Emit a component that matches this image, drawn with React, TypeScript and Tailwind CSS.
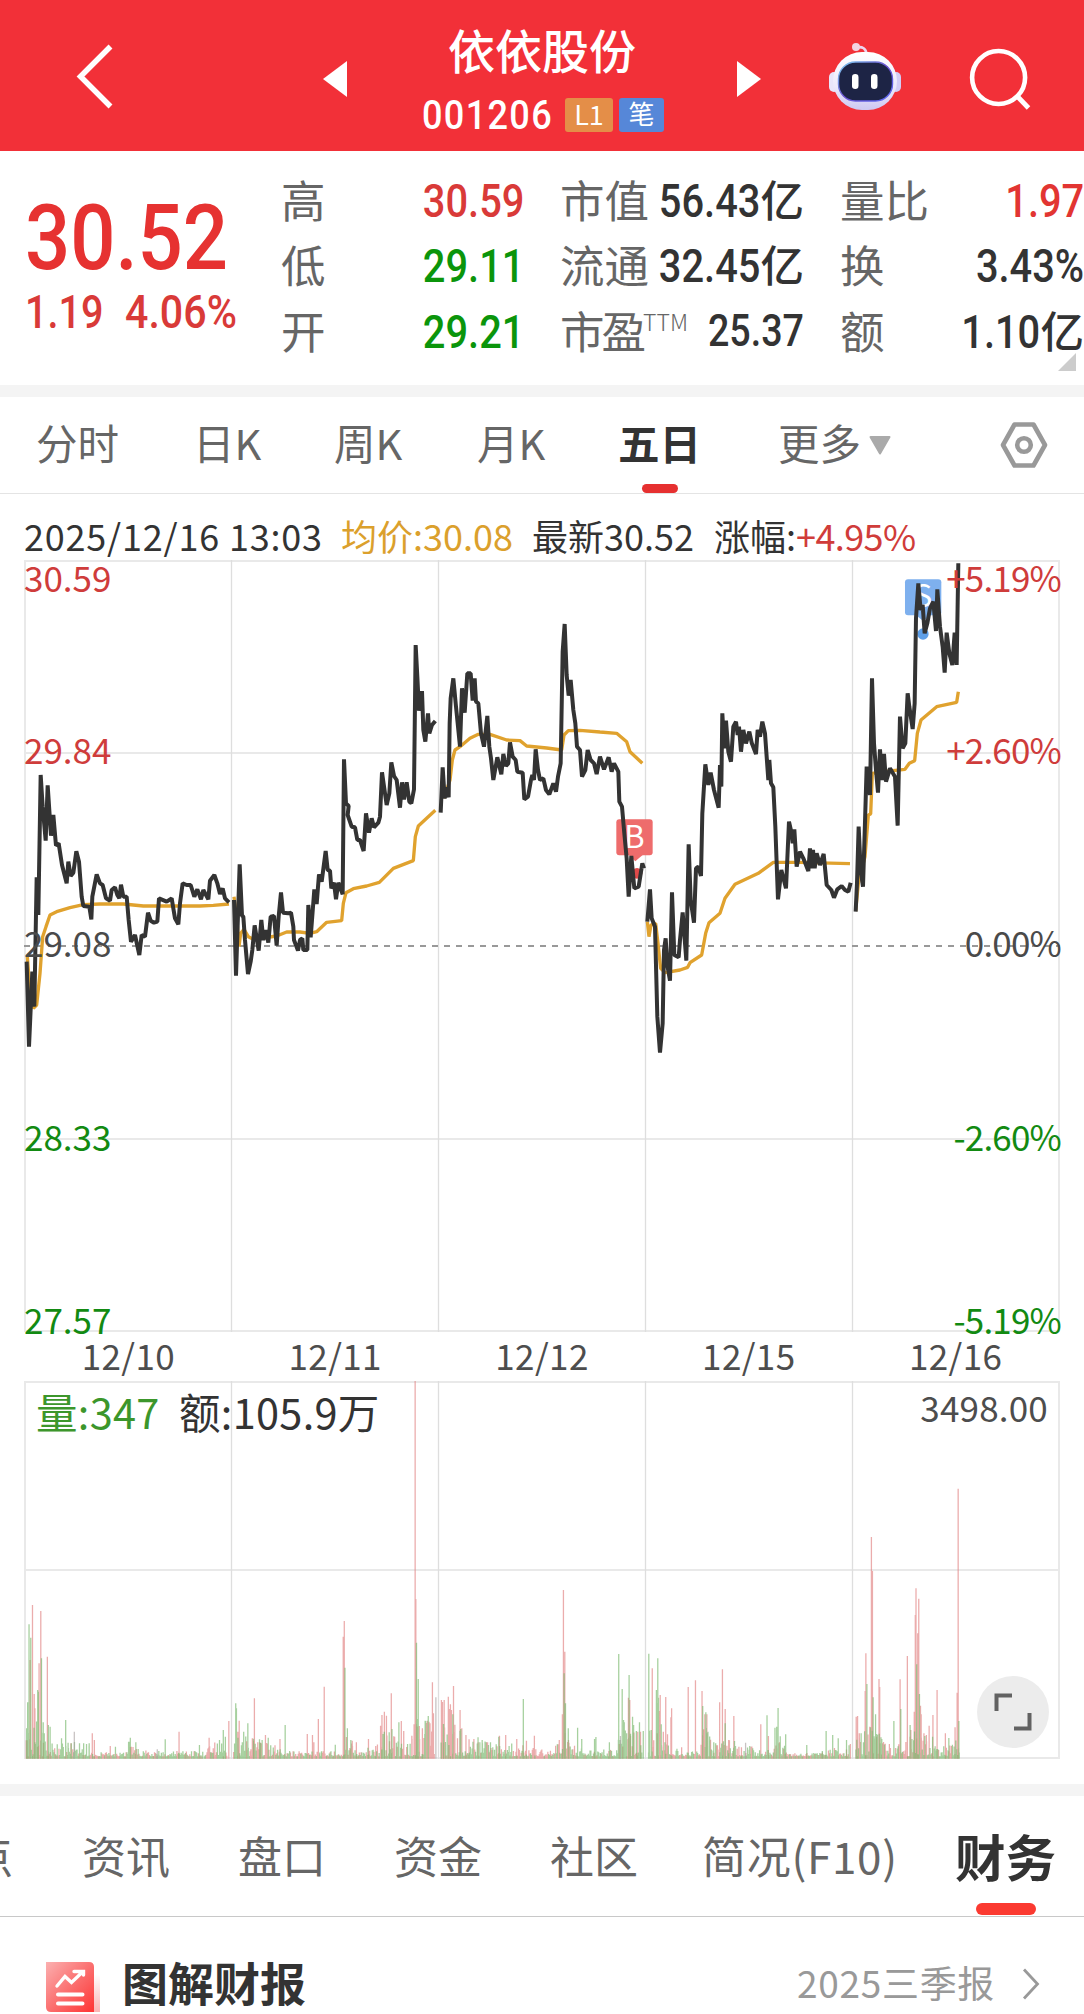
import React from "react";

const CJK = "font-['Noto_Sans_CJK_SC',sans-serif]";
const NUM = "font-['Roboto','Noto_Sans_CJK_SC',sans-serif]";

/* ---------- price data: one entry per trading day, three units per pixel ---------- */
const days = [
  {
    dx: 0,
    price:
      "80,1235 87,1490 97,1265 103,1370 110,982 115,1095 122,675 128,770 137,872 143,706 153,857 160,795 168,887 176,880 186,945 200,1000 205,935 212,978 220,968 229,904 237,935 245,1040 250,1068 268,1070 274,1108 277,1040 290,973 300,1000 308,1005 318,1045 330,1052 335,1020 345,1012 352,1035 358,1045 363,1004 370,1040 380,1040 386,1110 393,1175 405,1155 418,1215 425,1155 435,1160 444,1088 452,1112 462,1118 472,1115 477,1045 500,1055 515,1045 525,1105 535,1123 540,1060 548,1000 560,1005 572,1005 583,1040 592,1018 603,1048 610,1020 625,1048 630,992 643,975 652,1000 660,1032 668,1015 675,1045 687,1057",
    avg: "82,1220 88,1300 100,1375 110,1365 120,1270 128,1160 138,1130 150,1095 170,1085 210,1073 250,1064 300,1062 370,1062 430,1068 500,1068 600,1068 640,1066 687,1062",
  },
  {
    dx: 660,
    price:
      "42,1050 48,1277 59,943 66,1097 70,1100 75,1170 84,1272 92,1235 97,1200 104,1126 116,1202 124,1110 130,1170 138,1140 145,1178 152,1100 162,1098 170,1187 176,1100 183,1027 189,1088 205,1090 213,1088 220,1130 222,1170 234,1202 240,1170 247,1165 250,1200 262,1200 265,1065 272,1162 283,1018 290,1062 297,973 305,995 317,903 323,960 330,962 334,1015 342,998 348,1048 355,998 368,1033 372,628 378,760 386,768 383,795 395,830 405,832 412,870 420,870 431,903 438,790 447,848 455,805 462,832 475,818 480,800 486,667 500,765 508,730 514,637 522,678 530,690 540,773 546,697 552,748 560,697 568,755 574,760 582,718 587,285 592,380 597,482 606,423 610,540 616,575 624,490 628,550 636,525 646,513",
    avg: "42,1040 50,1100 57,1190 62,1150 72,1138 85,1160 100,1168 170,1158 200,1146 240,1146 270,1150 290,1145 320,1117 365,1112 370,1060 378,1028 400,1016 440,1008 478,997 520,955 580,932 586,860 595,828 620,805 646,781",
  },
  {
    dx: 1260,
    price:
      "62,788 68,652 74,745 80,712 86,742 89,520 92,445 100,385 108,470 120,590 126,415 134,488 142,370 152,370 158,452 164,385 168,455 175,460 183,550 192,590 202,498 208,590 213,625 220,690 232,622 244,673 250,612 258,648 265,640 270,577 278,620 287,630 292,665 308,668 313,748 324,740 333,690 337,675 342,690 347,598 354,660 360,690 370,685 378,720 388,733 400,700 408,725 414,680 422,640 428,305 434,222 440,375 446,437 452,390 460,480 466,520 471,590 480,600 486,680 496,660 503,600 512,630 522,640 530,672 540,620 552,658 566,622 575,665 582,640 595,665 598,755 606,770 613,850 620,925 626,1040 634,918 643,1015 656,1010 667,940 672,955",
    avg: "72,745 90,690 97,630 105,600 120,590 150,565 175,553 210,553 260,570 300,572 320,588 380,594 425,600 432,555 445,542 480,541 540,546 590,550 620,575 630,605 667,640",
  },
  {
    dx: 1860,
    price:
      "82,1115 90,1018 95,1105 105,1130 112,1400 120,1508 128,1420 132,1200 137,1165 142,1245 150,1292 156,1027 163,1215 176,1222 180,1170 188,1087 199,1232 206,883 212,1050 222,1118 228,955 235,950 243,978 247,790 256,643 265,705 272,668 282,720 296,773 300,645 304,710 307,490 313,595 318,512 325,605 333,635 340,530 348,515 353,555 357,530 363,605 370,540 378,580 388,545 395,578 408,612 413,540 420,560 427,515 435,550 445,690 448,630 453,700 460,712 466,830 474,1048 484,960 498,1015 507,815 515,850 518,880 523,838 530,950 540,905 550,925 565,963 570,895 574,955 579,900 584,955 590,910 600,945 611,912 620,1005 634,1020 642,1043 652,1018 665,1008 675,1020 685,1025 692,998",
    avg: "82,1115 87,1160 93,1125 107,1120 114,1180 122,1255 135,1268 180,1260 203,1252 210,1238 245,1215 257,1150 267,1118 300,1090 315,1045 345,1003 415,970 460,937 540,937 690,941",
  },
  {
    dx: 1860,
    price:
      "707,1085 711,1000 716,830 722,960 729,1010 734,850 740,650 750,735 756,385 762,580 768,660 774,728 780,598 786,690 792,612 798,695 810,655 825,680 833,827 840,500 848,595 856,580 863,430 868,470 878,537 884,460 888,205 895,100 902,180 908,165 914,250 922,220 930,175 940,155 948,243 952,118 960,230 968,290 974,368 980,248 988,310 997,345 1004,248 1010,345 1015,40",
    avg: "707,1083 715,1000 735,920 745,795 752,792 757,670 790,665 855,658 868,640 884,632 892,550 903,510 950,470 1010,457 1015,425",
  },
];

/* ---------- volume data: colour, x, top (baseline is 1345) ---------- */
const spikes =
  "g77,1255 g80,1177 g84,943 r87,1050 g89,983 r94,885 r99,1152 r101,1195 g109,1140 r113,1060 r118,903 g120,1045 g111,1145 g125,1237 g128,1270 r137,1040 g140,1245 g145,1250 g178,1285 g190,1230 n215,1265 g197,1298 g206,1300 g230,1300 g242,1300 g258,1300 r267,1270 r273,1290 r319,1308 g334,1310 g372,1295 g377,1283 g393,1297 n455,1318 g478,1288 r518,1265 g577,1305 r605,1283 r617,1315 g635,1290 g646,1260 g652,1280 r662,1233 g682,1180 g684,1195 r692,1232 r688,1265 g705,1265 g717,1240 r736,1165 r730,1285 r733,1292 r752,1297 r768,1275 g776,1283 r810,1287 g825,1245 r889,1272 r904,1275 r908,1297 r921,1227 r938,1130 g970,1304 r993,980 r996,933 g998,1073 g1005,1255 g1015,1290 r1019,1292 r1031,1297 r1066,1287 r1087,1308 r1101,1247 r1105,1215 g1108,1272 r1112,1205 r1118,1217 g1126,1267 r1132,1150 g1134,1257 g1154,1237 r1161,1233 r1168,1263 r1192,1287 r1198,1243 r1201,213 r1203,867 g1205,998 g1207,1227 g1210,1107 r1213,1248 r1222,1255 g1230,1232 g1239,1218 r1235,1250 r1244,1240 r1251,1117 r1254,1210 n1261,1162 r1277,1170 r1280,1176 g1283,1242 r1285,1170 r1297,1160 r1300,1197 r1303,1183 r1306,1200 r1312,1128 g1310,1213 r1315,1267 r1331,1200 g1333,1257 r1336,1255 r1348,1275 r1357,1288 r1371,1287 g1383,1282 g1395,1290 r1408,1297 g1419,1297 r1445,1277 g1443,1280 r1463,1275 r1495,1287 g1514,1167 r1523,1292 r1546,1277 " +
  "r1618,1290 r1627,1213 r1630,840 g1632,1090 r1634,1025 g1636,1180 g1644,1255 r1646,1298 g1671,1253 g1683,1287 g1720,1287 g1724,1281 g1763,1297 g1790,1032 n1795,1278 g1800,1137 g1804,1230 g1806,1237 g1813,1270 r1818,1163 g1820,1095 r1822,1170 r1824,1277 g1830,1220 g1833,1245 g1841,1263 r1845,1265 g1850,1237 r1853,1265 g1861,1263 g1877,1031 r1887,1075 g1879,1262 g1884,1260 g1899,1140 g1903,1045 g1901,1180 g1905,1163 r1910,1155 r1908,1203 g1913,1243 r1919,1265 r1926,1161 r1931,1290 r1943,1195 r1941,1222 r1972,1312 r1991,1131 r2012,1111 r2031,1143 g2033,1188 r2039,1213 g2042,1207 r2045,1213 g2048,1265 g2065,1297 r2082,1177 r2090,1078 r2098,1197 g2098,1240 r2108,1290 r2123,1218 g2125,1293 r2145,1312 n2157,1298 g2169,1308 r2201,1243 g2219,1216 r2223,1278 g2242,1253 g2247,1250 g2251,1194 r2255,1297 g2273,1273 g2334,1305 g2379,1323 g2390,1263 g2409,1275 g2425,1285 g2449,1290 r2460,1302 r2477,1220 r2481,1218 r2486,1270 g2498,1297 r2505,1030 r2503,1143 g2508,1122 r2521,681 r2524,783 g2526,1162 g2533,1213 g2536,1272 r2543,1107 r2545,1131 g2551,1287 r2573,1302 g2586,1233 r2604,1108 g2606,1197 r2600,1303 r2625,1038 g2633,1245 r2635,1260 r2645,1205 r2648,915 r2650,835 g2652,1063 r2655,970 r2658,866 g2660,1152 r2663,1187 r2665,1213 r2673,1270 r2680,1275 r2688,1247 g2698,1280 r2699,1215 r2711,1140 r2735,1270 g2745,1284 r2763,1252 r2772,536 r2769,1148 g2774,1233";

/* Upper bound of the small bars between spikes: [x, height, share of red]. */
const envelope = [
  [76, 140, 0.4], [130, 110, 0.4], [150, 45, 0.3], [250, 45, 0.3], [280, 14, 0.3], [360, 14, 0.5], [375, 45, 0.2],
  [410, 18, 0.5], [590, 16, 0.4], [610, 34, 0.6], [650, 60, 0.3], [675, 80, 0.3], [715, 60, 0.3], [780, 45, 0.5],
  [830, 16, 0.4], [990, 16, 0.5], [1000, 70, 0.3], [1030, 22, 0.4], [1090, 32, 0.6], [1110, 80, 0.5], [1180, 50, 0.4],
  [1205, 120, 0.3], [1255, 110, 0.5], [1275, 95, 0.7], [1310, 115, 0.6], [1345, 65, 0.4], [1400, 50, 0.4], [1480, 45, 0.4],
  [1530, 28, 0.5], [1600, 22, 0.6], [1630, 90, 0.5], [1650, 48, 0.3], [1690, 22, 0.4], [1770, 20, 0.4], [1795, 70, 0.2],
  [1825, 90, 0.3], [1856, 65, 0.4], [1876, 90, 0.3], [1905, 130, 0.3], [1945, 48, 0.4], [1965, 14, 0.5], [2025, 18, 0.4],
  [2040, 130, 0.4], [2060, 34, 0.3], [2100, 65, 0.4], [2150, 30, 0.4], [2240, 34, 0.2], [2260, 65, 0.2], [2285, 12, 0.4],
  [2380, 12, 0.4], [2430, 34, 0.4], [2460, 40, 0.3], [2476, 75, 0.5], [2515, 95, 0.4], [2550, 65, 0.4], [2580, 20, 0.5],
  [2640, 65, 0.4], [2665, 120, 0.4], [2700, 45, 0.4], [2730, 34, 0.3], [2776, 65, 0.4],
];
const gaps = [[588, 590], [657, 674], [1257, 1274], [1857, 1875], [2457, 2474]];

function levelAt(x: number) {
  for (let i = 1; i < envelope.length; i++) {
    if (x <= envelope[i][0]) {
      const [x0, h0] = envelope[i - 1];
      const [x1, h1, red] = envelope[i];
      return [h0 + ((x - x0) / (x1 - x0)) * (h1 - h0), red];
    }
  }
  return [20, 0.5];
}

const tint: Record<string, string> = { r: "#e28484", g: "#78b86c", n: "#a9a2a2" };

function volumePaths() {
  const out: Record<string, string> = { r: "", g: "", n: "" };
  let seed = 20251216;
  const rnd = () => {
    seed = (seed * 1103515245 + 12345) % 2147483648;
    return seed / 2147483648;
  };
  for (let x = 76; x < 2776; x += 2.49) {
    const a = rnd();
    const b = rnd();
    if (gaps.some(([s, e]) => x > s && x < e)) continue;
    const [h, red] = levelAt(x);
    const top = 1339 - Math.pow(a, 1.7) * h;
    out[b < red ? "r" : "g"] += `M${x.toFixed(1)} 1346V${top.toFixed(1)}`;
  }
  for (const s of spikes.split(" ")) {
    const [x, y] = s.slice(1).split(",");
    out[s[0]] += `M${x} 1346V${y}`;
  }
  return out;
}
const volume = volumePaths();

const GRID_X = [231.5, 438.5, 645.5, 852.5];

function Robot() {
  return (
    <svg width="74" height="70" viewBox="0 0 74 70" className="ml-[67px] shrink-0">
      <defs>
        <linearGradient id="shell" x1="0" y1="0" x2="0" y2="1">
          <stop offset="0" stopColor="#ffffff" />
          <stop offset="0.6" stopColor="#ece8fb" />
          <stop offset="1" stopColor="#cdc8f2" />
        </linearGradient>
        <linearGradient id="rim" x1="0" y1="0" x2="1" y2="1">
          <stop offset="0" stopColor="#7fd2f2" />
          <stop offset="0.5" stopColor="#6a4fd0" />
          <stop offset="1" stopColor="#5a6cf5" />
        </linearGradient>
      </defs>
      <path d="M28 6.500q10-2 10.500 7" fill="none" stroke="#ecd5ee" strokeWidth="2.600" />
      <circle cx="28" cy="6" r="4" fill="#f3d3e2" />
      <rect x="1" y="31" width="10" height="20" rx="5" fill="#e9e5fa" />
      <rect x="63" y="31" width="10" height="20" rx="5" fill="#d3cdf6" />
      <rect x="5" y="11" width="64" height="58" rx="29" fill="url(#shell)" />
      <rect x="10.500" y="21" width="54" height="39" rx="17" fill="#1d2445" stroke="url(#rim)" strokeWidth="1.400" />
      <rect x="24" y="33" width="6.500" height="15" rx="3.200" fill="#fff" />
      <rect x="43" y="33" width="6.500" height="15" rx="3.200" fill="#fff" />
    </svg>
  );
}

function Header() {
  return (
    <header className="flex h-[151px] items-start bg-[#f23038]">
      <svg width="38" height="68" viewBox="0 0 38 68" className="mt-[42px] ml-[76px] shrink-0">
        <path d="M34.500 4.500 4.500 34.500 34.500 64.500" fill="none" stroke="#fff" strokeWidth="5.500" />
      </svg>
      <svg width="24" height="36" viewBox="0 0 24 36" className="mt-[61px] ml-[209px] shrink-0">
        <path d="M24 0V36L0 18Z" fill="#fff" />
      </svg>
      <div className="flex w-[390px] shrink-0 flex-col items-center">
        <h1 className={`${CJK} mt-[19px] text-[47px] leading-[60px] font-medium text-white`}>依依股份</h1>
        <div className="mt-[16px] flex h-[40px] w-[242px] items-center">
          <span className={`${NUM} ml-[1px] w-[143px] shrink-0 origin-left scale-x-[.88] text-[41px] leading-[40px] font-medium tracking-[1.500px] text-white`}>
            001206
          </span>
          <span className={`${CJK} flex h-[34px] w-[48px] shrink-0 items-center justify-center rounded-[3px] bg-[#e48e48] pb-[3px] text-[27px] leading-[30px] text-white`}>
            L1
          </span>
          <span className={`${CJK} ml-[6px] flex h-[34px] w-[45px] shrink-0 items-center justify-center rounded-[3px] bg-[#5687d8] pb-[5px] text-[26px] leading-[30px] text-white`}>
            笔
          </span>
        </div>
      </div>
      <svg width="24" height="36" viewBox="0 0 24 36" className="mt-[61px] shrink-0">
        <path d="M0 0V36L24 18Z" fill="#fff" />
      </svg>
      <div className="mt-[41px] flex shrink-0">
        <Robot />
        <svg width="64" height="64" viewBox="0 0 64 64" className="mt-[7px] ml-[67px] shrink-0">
          <circle cx="29.600" cy="29.500" r="26.500" fill="none" stroke="#fff" strokeWidth="4.600" />
          <path d="M48.500 48.500 59.500 60" stroke="#fff" strokeWidth="4.800" />
        </svg>
      </div>
    </header>
  );
}

type Row = { label: React.ReactNode; value: string; unit?: string; tone: string; size?: string };

function Column({ rows, className }: { rows: Row[]; className: string }) {
  return (
    <div className={`shrink-0 ${className}`}>
      {rows.map((r, i) => (
        <div key={i} className="flex h-[65.5px] items-center justify-between whitespace-nowrap">
          <span className={`${CJK} -mt-[4px] text-[44.500px] leading-[60px] text-[#666]`}>{r.label}</span>
          <span className={`flex items-center ${r.tone}`}>
            <span className={`${NUM} -ml-[20px] inline-block origin-right scale-x-[.865] leading-[60px] font-medium ${r.size ?? "text-[46px]"}`}>
              {r.value}
            </span>
            {r.unit && <span className={`${CJK} -mt-[4px] text-[43.500px] leading-[60px] font-medium`}>{r.unit}</span>}
          </span>
        </div>
      ))}
    </div>
  );
}

function Quote() {
  const up = "text-[#d93a38]";
  const down = "text-[#0b950b]";
  const flat = "text-[#333]";
  return (
    <section className="relative flex h-[234px] pt-[17px]">
      <div className="w-[281px] shrink-0 pl-[25px]">
        <div className={`${NUM} mt-[20px] h-[100px] w-[230px] origin-left scale-x-[.87] text-[91.500px] leading-[100px] font-medium text-[#e63231]`}>
          30.52
        </div>
        <div className={`${NUM} mt-[-6px] flex h-[60px] text-[46px] leading-[60px] font-medium whitespace-nowrap ${up}`}>
          <span className="w-[100px] origin-left scale-x-[.86]">1.19</span>
          <span className="origin-left scale-x-[.895]">4.06%</span>
        </div>
      </div>
      <Column
        className="w-[243px]"
        rows={[
          { label: "高", value: "30.59", tone: up },
          { label: "低", value: "29.11", tone: down },
          { label: "开", value: "29.21", tone: down },
        ]}
      />
      <Column
        className="ml-[36px] w-[244px]"
        rows={[
          { label: "市值", value: "56.43", unit: "亿", tone: flat },
          { label: "流通", value: "32.45", unit: "亿", tone: flat },
          {
            label: (
              <span className="flex">
                <span className="tracking-[-3px]">市盈</span>
                <span className="mt-[-9px] text-[23px] font-light">TTM</span>
              </span>
            ),
            value: "25.37",
            tone: flat,
            size: "text-[43.500px]",
          },
        ]}
      />
      <Column
        className="ml-[36px] w-[244px]"
        rows={[
          { label: "量比", value: "1.97", tone: "text-[#e23532]" },
          { label: "换", value: "3.43%", tone: flat },
          { label: "额", value: "1.10", unit: "亿", tone: flat },
        ]}
      />
      <svg width="18" height="18" className="absolute right-[8px] bottom-[14px]">
        <path d="M18 0V18H0Z" fill="#ccc" />
      </svg>
    </section>
  );
}

function PeriodTabs() {
  const tab = "shrink-0";
  return (
    <nav className={`${CJK} relative flex h-[97px] items-start border-b border-[#e4e4e4] pt-[13px] pl-[36px] text-[41.500px] leading-[64px] whitespace-nowrap text-[#666]`}>
      <span className={`${tab} w-[157px]`}>分时</span>
      <span className={`${tab} w-[141px]`}>日K</span>
      <span className={`${tab} w-[143px]`}>周K</span>
      <span className={`${tab} w-[141px]`}>月K</span>
      <span className={`${tab} relative w-[160px] font-bold text-[#333]`}>
        五日
        <i className="absolute top-[74px] left-[24px] h-[9px] w-[36px] rounded-full bg-[#e63030]" />
      </span>
      <span className={`${tab} w-[91px]`}>更多</span>
      <svg width="22" height="19" viewBox="0 0 22 19" className="mt-[26px] shrink-0">
        <path d="M1.500 1H20.500L11 17.500Z" fill="#aaa" stroke="#aaa" strokeWidth="2" strokeLinejoin="round" />
      </svg>
      <svg width="50" height="48" viewBox="0 0 50 48" className="mt-[11px] ml-[108px] shrink-0 text-[#999]" fill="none" stroke="currentColor">
        <path d="M15.500 3.500H34.500L46 24 34.500 44.500H15.500L4 24Z" strokeWidth="4.600" strokeLinejoin="round" />
        <circle cx="25" cy="24" r="6.800" strokeWidth="4.600" />
      </svg>
    </nav>
  );
}

function ChartHeader() {
  return (
    <div className={`${CJK} flex h-[66px] pt-[11px] pl-[24px] text-[36px] leading-[60px] whitespace-nowrap text-[#333]`}>
      <span className="w-[317px] tracking-[.8px]">2025/12/16 13:03</span>
      <span className="w-[191px] text-[#dba02c]">均价:30.08</span>
      <span className="w-[182px]">最新30.52</span>
      <span>涨幅:</span>
      <span className="tracking-[-.6px] text-[#d03c3a]">+4.95%</span>
    </div>
  );
}

function PriceChart() {
  const left = [
    ["30.59", "top-[-5px] text-[#cf3c3b]"],
    ["29.84", "top-[167px] text-[#cf3c3b]"],
    ["29.08", "top-[360px] text-[#4a4a4a]"],
    ["28.33", "top-[554px] text-[#128a12]"],
    ["27.57", "top-[737px] text-[#128a12]"],
  ];
  const right = ["+5.19%", "+2.60%", "0.00%", "-2.60%", "-5.19%"];
  return (
    <section className="relative h-[771px]">
      <svg width="1084" height="771" viewBox="0 560 1084 771" className="block overflow-visible">
        <g stroke="#e9e9e9" strokeWidth="2" fill="none">
          <path d="M24 561H1060M24 753H1060M24 1139H1060M24 1331H1060M25 560V1332M1059 560V1332" />
        </g>
        {GRID_X.map((x) => (
          <path key={x} d={`M${x} 560V1332`} stroke="#dedede" strokeWidth="1.300" />
        ))}
        <path d="M24 946H1060" stroke="#999" strokeWidth="1.800" strokeDasharray="6 6" />
        <g transform="translate(0 550) scale(.33333)">
          <rect x="1849" y="808" width="109" height="108" rx="9" fill="#ee6c6c" />
          <path d="M1886 915H1928L1906 934Z" fill="#ee6c6c" />
          <circle cx="1911" cy="970" r="16" fill="#e04a4a" />
          <rect x="2715" y="88" width="109" height="108" rx="9" fill="#7eb0ee" />
          <path d="M2748 195H2792L2770 214Z" fill="#7eb0ee" />
          <circle cx="2769" cy="252" r="17" fill="#5e9fe8" />
          {days.map((d, i) => (
            <polyline key={i} points={d.avg} transform={`translate(${d.dx} 0)`} fill="none" stroke="#e0a22e" strokeWidth="10" strokeLinejoin="bevel" />
          ))}
        </g>
        <text x="634.500" y="848" className="font-['Noto_Sans_CJK_SC',sans-serif]" fontSize="31" fill="#fff" textAnchor="middle">
          B
        </text>
        <text x="923" y="607" className="font-['Noto_Sans_CJK_SC',sans-serif]" fontSize="31" fill="#fff" textAnchor="middle">
          S
        </text>
        <g transform="translate(0 550) scale(.33333)">
          {days.map((d, i) => (
            <polyline key={i} points={d.price} transform={`translate(${d.dx} 0)`} fill="none" stroke="#333" strokeWidth="12" strokeLinejoin="bevel" />
          ))}
        </g>
      </svg>
      {left.map(([t, c], i) => (
        <React.Fragment key={t}>
          <span className={`${CJK} absolute left-[24px] text-[35px] leading-[44px] ${c}`}>{t}</span>
          <span className={`${CJK} absolute right-[23px] text-[35px] leading-[44px] tracking-[-.8px] ${c}`}>{right[i]}</span>
        </React.Fragment>
      ))}
    </section>
  );
}

function DateAxis() {
  return (
    <div className={`${CJK} grid h-[50px] grid-cols-5 px-[25px] text-center text-[35px] leading-[47px] tracking-[.4px] text-[#4d4d4d]`}>
      {["12/10", "12/11", "12/12", "12/15", "12/16"].map((d) => (
        <span key={d}>{d}</span>
      ))}
    </div>
  );
}

function VolumeChart() {
  return (
    <section className="relative h-[403px]">
      <svg width="1084" height="378" viewBox="0 1381 1084 378" className="block">
        <path
          d="M24 1382H1060M24 1570H1060M24 1758H1060M25 1381V1759M1059 1381V1759"
          stroke="#e9e9e9"
          strokeWidth="2"
        />
        {GRID_X.map((x) => (
          <path key={x} d={`M${x} 1381V1759`} stroke="#dedede" strokeWidth="1.300" />
        ))}
        <g transform="translate(0 1310) scale(.34566 .33333)" fill="none" strokeWidth="3.700">
          <path d={volume.r} stroke={tint.r} strokeOpacity=".68" />
          <path d={volume.g} stroke={tint.g} strokeOpacity=".66" />
          <path d={volume.n} stroke={tint.n} strokeOpacity=".65" />
        </g>
      </svg>
      <div className={`${CJK} absolute top-[0px] left-[36px] flex text-[41.500px] leading-[60px] whitespace-nowrap text-[#333]`}>
        <span className="w-[143px] tracking-[.3px] text-[#3c962b]">量:347</span>
        <span className="tracking-[.3px]">额:105.9万</span>
      </div>
      <span className={`${CJK} absolute top-[4px] right-[36px] text-[35px] leading-[44px] tracking-[.2px] text-[#4d4d4d]`}>3498.00</span>
      <button className="absolute top-[295px] left-[977px] flex h-[72px] w-[72px] items-center justify-center rounded-full bg-[#ececec]">
        <svg width="38" height="38" viewBox="0 0 38 38" fill="none" stroke="#626262" strokeWidth="4">
          <path d="M18 2.500H2.500V18M20 35.500H35.500V20" />
        </svg>
      </button>
    </section>
  );
}

function SectionTabs() {
  return (
    <nav className={`${CJK} relative flex h-[121px] items-start overflow-hidden border-b border-[#c8c8c8] pt-[27px] text-[44px] leading-[64px] whitespace-nowrap text-[#666]`}>
      <span className="-ml-[31px] w-[113px] shrink-0">点</span>
      <span className="w-[156px] shrink-0">资讯</span>
      <span className="w-[156px] shrink-0">盘口</span>
      <span className="w-[156px] shrink-0">资金</span>
      <span className="w-[152px] shrink-0">社区</span>
      <span className="w-[253px] shrink-0 tracking-[.7px]">简况(F10)</span>
      <span className="relative shrink-0 text-[50.500px] font-bold text-[#333]">
        财务
        <i className="absolute top-[80px] left-[21px] h-[12px] w-[60px] rounded-full bg-[#fb3a31]" />
      </span>
    </nav>
  );
}

function ReportRow() {
  return (
    <section className="flex h-[97px] items-start overflow-hidden pl-[46px] whitespace-nowrap">
      <svg width="54" height="50" viewBox="0 0 54 50" className="mt-[45px] shrink-0">
        <defs>
          <linearGradient id="doc" x1="0" y1="0" x2="1" y2="1">
            <stop offset="0" stopColor="#fbb0b0" />
            <stop offset="0.55" stopColor="#fb6a6a" />
            <stop offset="1" stopColor="#ff3434" />
          </linearGradient>
          <linearGradient id="fold" x1="0" y1="0" x2="0" y2="1">
            <stop offset="0" stopColor="#fff" />
            <stop offset="1" stopColor="#fbb4b4" />
          </linearGradient>
        </defs>
        <path d="M48 12h2q4 0 4 4V50H48Z" fill="url(#fold)" />
        <path d="M0 0H43Q48 0 48 5V50H5Q0 50 0 45Z" fill="url(#doc)" />
        <path d="M11 24 19 14.500 25.500 20.500 36.500 10M28 9.500H37.500V13" fill="none" stroke="#fff" strokeWidth="3.400" strokeLinecap="round" />
        <path d="M12 32.500H36.500M12 41.500H36.500" stroke="#fff" strokeWidth="4" strokeLinecap="round" />
      </svg>
      <h2 className={`${CJK} mt-[32px] ml-[22px] w-[675px] shrink-0 text-[46px] leading-[64px] font-bold text-[#333]`}>图解财报</h2>
      <span className={`${CJK} mt-[33px] w-[198px] shrink-0 text-[37px] leading-[64px] tracking-[.7px] text-[#999]`}>2025三季报</span>
      <svg width="18" height="32" viewBox="0 0 18 32" className="mt-[51px] ml-[27px] shrink-0">
        <path d="M2 1.500 15.500 16 2 30.500" fill="none" stroke="#999" strokeWidth="2.800" />
      </svg>
    </section>
  );
}

export default function App() {
  return (
    <main className="h-[2014px] w-[1084px] overflow-hidden bg-white">
      <Header />
      <Quote />
      <div className="h-[12px] bg-[#f4f4f4]" />
      <PeriodTabs />
      <ChartHeader />
      <PriceChart />
      <DateAxis />
      <VolumeChart />
      <div className="h-[12px] bg-[#f4f4f4]" />
      <SectionTabs />
      <ReportRow />
    </main>
  );
}
